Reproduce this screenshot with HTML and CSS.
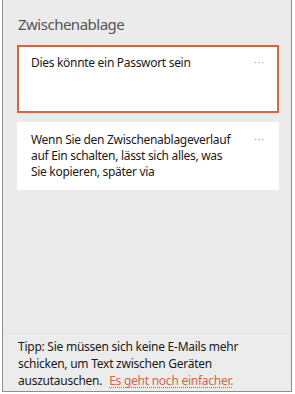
FILE: index.html
```html
<!DOCTYPE html>
<html lang="de">
<head>
<meta charset="utf-8">
<link rel="stylesheet" href="styles.css">
</head>
<body>
<div class="panel">
  <div class="title">Zwischenablage</div>
  <div class="list">
    <div class="card selected">
      <div class="card-text">Dies könnte ein Passwort sein</div>
      <div class="more">···</div>
    </div>
    <div class="card">
      <div class="card-text">Wenn Sie den Zwischenablageverlauf auf Ein schalten, lässt sich alles, was Sie kopieren, später via</div>
      <div class="more">···</div>
    </div>
  </div>
  <div class="tip"><span>Tipp: Sie müssen sich keine E-Mails mehr schicken, um Text zwischen Geräten auszutauschen.</span> <a class="link" href="#">Es geht noch einfacher.</a></div>
</div>
</body>
</html>
```
FILE: styles.css
```css
html, body {
  margin: 0;
  padding: 0;
  background: #ffffff;
}
body {
  font-family: "Noto Sans", "Open Sans", sans-serif;
  color: #1a1a1a;
}
.panel {
  box-sizing: border-box;
  margin-left: 2px;
  width: 290px;
  height: 392px;
  background: #ebebeb;
  border: 1px solid #8f8f8f;
  border-top: none;
  display: flex;
  flex-direction: column;
}
.title {
  padding: 14px 15px 0 15px;
  font-size: 15px;
  line-height: 20px;
  color: #555555;
  letter-spacing: -0.5px;
}
.list {
  margin-top: 11px;
  padding: 0 12px 0 14px;
  display: flex;
  flex-direction: column;
  gap: 9px;
}
.card {
  box-sizing: border-box;
  height: 68px;
  background: #ffffff;
  border: 2px solid transparent;
  padding: 8px 12px 6px 12px;
  display: flex;
  justify-content: space-between;
  align-items: flex-start;
}
.card.selected {
  border-color: #d4683c;
}
.card-text {
  font-size: 12px;
  line-height: 16px;
  width: 202px;
  letter-spacing: -0.3px;
}
.more {
  font-size: 10px;
  line-height: 12px;
  color: #a8a8a8;
  letter-spacing: 1px;
  margin-top: 1px;
}
.tip {
  margin-top: auto;
  border-top: 1px solid #e4e4e4;
  background: #ececec;
  padding: 4px 20px 2px 15px;
  font-size: 12px;
  line-height: 17px;
  letter-spacing: -0.25px;
}
.link {
  color: #d4683c;
  margin-left: 4px;
  text-decoration: underline dotted #d4683c;
  text-underline-offset: 2px;
}
```
